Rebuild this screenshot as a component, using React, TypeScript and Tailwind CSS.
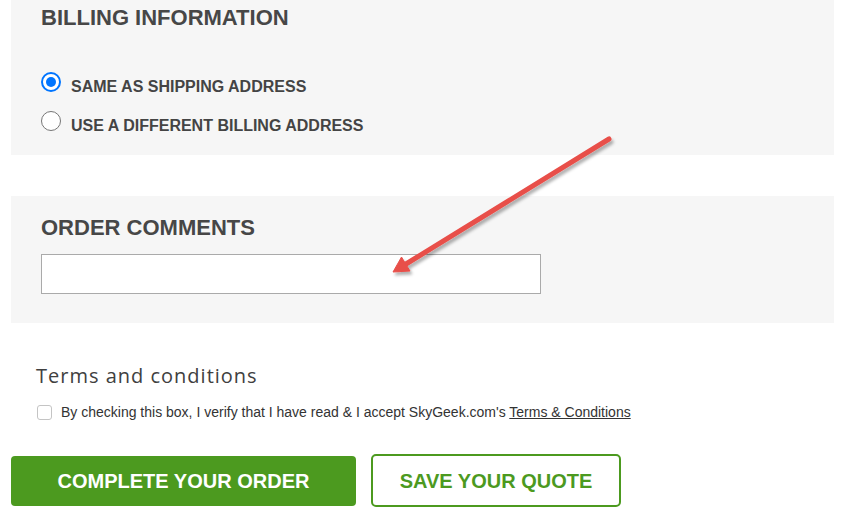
import React, { useState } from 'react';

export default function App() {
  const [billing, setBilling] = useState<'same' | 'different'>('same');
  const [agree, setAgree] = useState(false);
  const [comment, setComment] = useState('');

  const radio = (key: 'same' | 'different', label: string) => (
    <label className="flex items-start h-[39px] cursor-pointer" onClick={() => setBilling(key)}>
      {billing === key ? (
        <span className="w-5 h-5 rounded-full border-2 border-[#0075ff] bg-white flex items-center justify-center shrink-0">
          <span className="w-[10px] h-[10px] rounded-full bg-[#0075ff]" />
        </span>
      ) : (
        <span className="w-5 h-5 rounded-full border border-[#767676] bg-white shrink-0" />
      )}
      <span className="ml-[10px] mt-[5px] text-[16px] leading-[20px] font-bold text-[#444]">{label}</span>
    </label>
  );

  return (
    <div className="relative w-[847px] h-[528px] overflow-hidden bg-white font-['Liberation_Sans',Arial,sans-serif]">
      <div className="pl-[11px] pr-[13px]">
        {/* Billing */}
        <div className="bg-[#f6f6f6] pt-[5px] pb-[5px] pl-[30px]">
          <h2 className="text-[22px] leading-[26px] font-bold text-[#474747]">BILLING INFORMATION</h2>
          <div className="mt-[41px]">
            {radio('same', 'SAME AS SHIPPING ADDRESS')}
            {radio('different', 'USE A DIFFERENT BILLING ADDRESS')}
          </div>
        </div>

        {/* Comments */}
        <div className="bg-[#f6f6f6] mt-[41px] pt-[19px] pb-[29px] pl-[30px]">
          <h2 className="text-[22px] leading-[26px] font-bold text-[#474747]">ORDER COMMENTS</h2>
          <input
            value={comment}
            onChange={(e) => setComment(e.target.value)}
            className="mt-[13px] block w-[500px] h-[40px] bg-white border border-[#aaa] px-2 text-[14px] outline-none"
          />
        </div>

        {/* Terms */}
        <div className="pl-[25px] mt-[41px]">
          <h3 className="font-['Open_Sans',sans-serif] text-[20px] leading-[24px] tracking-[1px] text-[#404040]">
            Terms and conditions
          </h3>
          <label className="flex items-start mt-[16px] cursor-pointer" onClick={() => setAgree(!agree)}>
            <span
              className={`mt-[1px] ml-[1px] w-[15px] h-[15px] rounded-[3px] border shrink-0 ${
                agree ? 'bg-[#0075ff] border-[#0075ff]' : 'bg-white border-[#c4c4c4]'
              }`}
            />
            <span className="ml-[9px] text-[14px] leading-[16px] text-[#333]">
              By checking this box, I verify that I have read &amp; I accept SkyGeek.com's{' '}
              <a className="underline text-[#333]">Terms &amp; Conditions</a>
            </span>
          </label>
        </div>

        {/* Buttons */}
        <div className="flex items-center gap-[15px] mt-[34px]">
          <button className="w-[345px] h-[50px] rounded-[4px] bg-[#4c9a1f] text-white text-[20px] font-bold">
            COMPLETE YOUR ORDER
          </button>
          <button className="w-[250px] h-[53px] rounded-[5px] border-2 border-[#4c9a1f] bg-white text-[#4c9a1f] text-[20px] font-bold">
            SAVE YOUR QUOTE
          </button>
        </div>
      </div>

      {/* annotation arrow */}
      <svg className="absolute inset-0 pointer-events-none" width="847" height="528" viewBox="0 0 847 528">
        <defs>
          <filter id="sh" x="-20%" y="-20%" width="140%" height="140%">
            <feDropShadow dx="2" dy="3" stdDeviation="1.5" floodColor="#000" floodOpacity="0.3" />
          </filter>
        </defs>
        <g filter="url(#sh)" fill="#e84f4a" stroke="#e84f4a">
          <line x1="609" y1="139" x2="406" y2="264" strokeWidth="5" strokeLinecap="round" />
          <polygon points="393,272 410,271 401.5,257" strokeWidth="1" strokeLinejoin="round" />
        </g>
      </svg>
    </div>
  );
}
